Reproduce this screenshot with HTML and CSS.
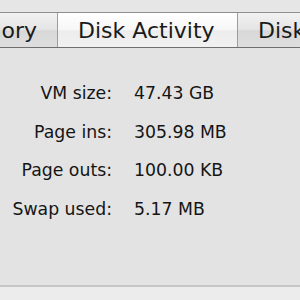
FILE: index.html
```html
<!DOCTYPE html>
<html>
<head>
<meta charset="utf-8">
<link rel="stylesheet" href="styles.css">
</head>
<body>
<div class="window">
  <div class="top-strip"></div>
  <div class="tabbar">
    <div class="tab tab-first"><span>System Memory</span></div>
    <div class="tab tab-selected"><span>Disk Activity</span></div>
    <div class="tab"><span>Disk Usage</span></div>
  </div>
  <div class="content">
    <div class="stats">
      <div class="label">VM size:</div><div class="value">47.43 GB</div>
      <div class="label">Page ins:</div><div class="value">305.98 MB</div>
      <div class="label">Page outs:</div><div class="value">100.00 KB</div>
      <div class="label">Swap used:</div><div class="value">5.17 MB</div>
    </div>
  </div>
  <div class="footer"></div>
</div>
</body>
</html>
```

FILE: styles.css
```css
html, body {
  margin: 0;
  padding: 0;
  width: 300px;
  height: 300px;
  overflow: hidden;
  background: #e8e8e8;
  font-family: "DejaVu Sans", "Liberation Sans", sans-serif;
  color: #1c1c1c;
}
.window {
  display: flex;
  flex-direction: column;
  height: 300px;
}
.top-strip {
  height: 12px;
  background: #e6e6e6;
}
.tabbar {
  display: flex;
  height: 34px;
  border-top: 1px solid #8e8e8e;
  border-bottom: 1px solid #6f6f6f;
  overflow: hidden;
  white-space: nowrap;
}
.tab {
  display: flex;
  align-items: center;
  flex: none;
  padding: 0 20px;
  font-size: 22px;
  color: #1a1a1a;
  background: linear-gradient(#f2f2f2, #e4e4e4 50%, #d8d8d8 52%, #dedede);
  border-right: 1px solid #9d9d9d;
}
.tab-first {
  width: 37px;
  padding-left: 0;
  justify-content: flex-end;
  overflow: hidden;
}
.tab-selected {
  width: 139px;
  background: linear-gradient(#ffffff, #f7f7f7 50%, #ededed 52%, #f1f1f1);
}
.content {
  flex: 1;
  background: #e3e3e3;
  border-bottom: 2px solid #c6c6c6;
}
.stats {
  display: grid;
  grid-template-columns: 112px auto;
  column-gap: 22px;
  grid-auto-rows: 38.5px;
  margin-top: 26px;
  font-size: 17.3px;
  line-height: 38px;
  color: #151515;
}
.label {
  text-align: right;
}
.footer {
  height: 13px;
  background: #ececec;
}
```
